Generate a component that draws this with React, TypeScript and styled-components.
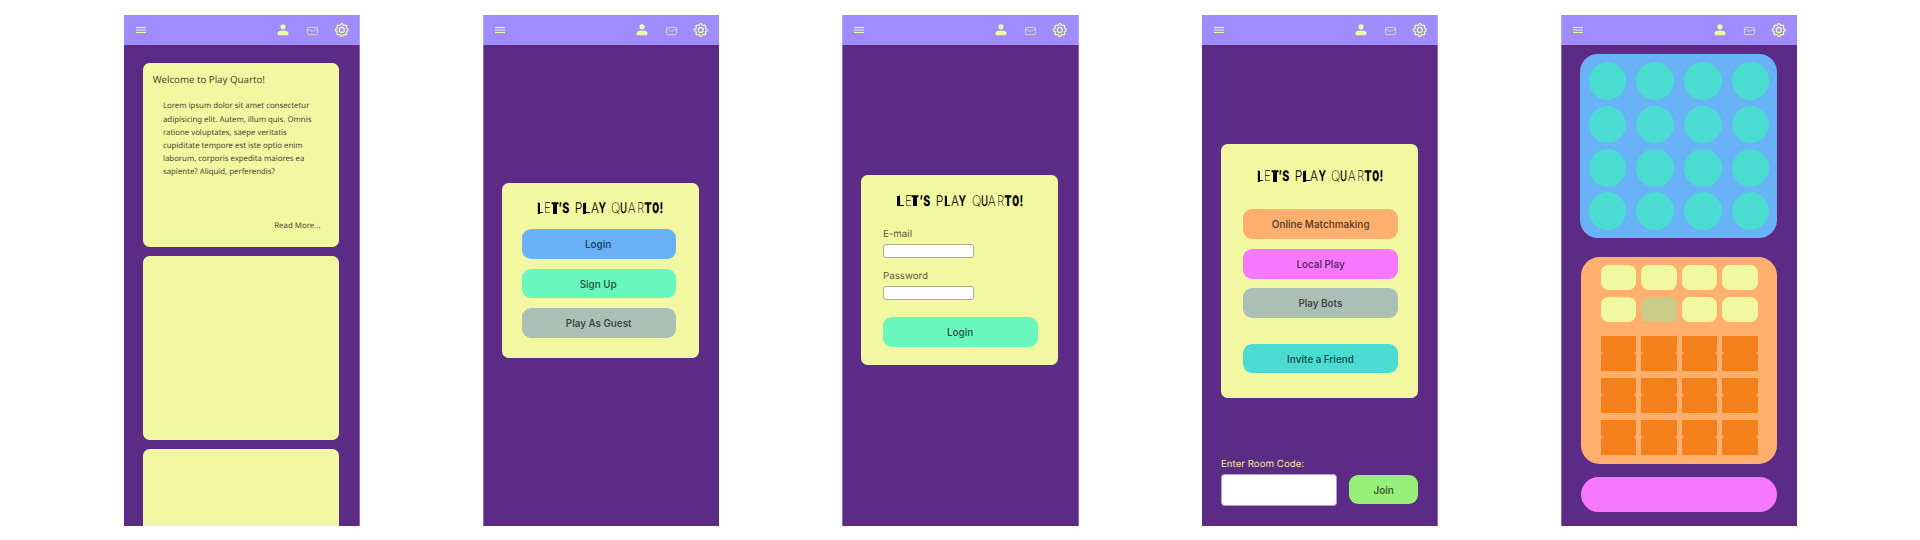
import React from "react";
import styled, { createGlobalStyle } from "styled-components";

const c = {
  purple: "#5b2b85",
  lilac: "#9f8cff",
  cream: "#f2f7a1",
  blue: "#69b2f7",
  mint: "#69f7be",
  grey: "#abbfb6",
  orange: "#ffb06e",
  pink: "#f678ff",
  teal: "#4adbd1",
  lime: "#98ef79",
  deep: "#f4801c",
};

const Global = createGlobalStyle`
  *, *::before, *::after { box-sizing: border-box; }
  body { margin: 0; background: #fff; overflow: hidden; text-rendering: geometricPrecision; }
`;

const Page = styled.main`
  display: flex;
  width: 1920px;
  height: 540px;
  padding: 15px 0 14px 124px;
  font-family: Inter, sans-serif;
`;

const Phone = styled.section<{ $w: number; $after: number }>`
  display: flex;
  flex-direction: column;
  flex: none;
  width: ${(p) => p.$w}px;
  height: 511px;
  margin-right: ${(p) => p.$after}px;
  overflow: hidden;
`;

type Edge = "left" | "right" | "both";
const edges = (e: Edge, color: string) => `
  ${e !== "right" ? `border-left: 1px solid ${color};` : ""}
  ${e !== "left" ? `border-right: 1px solid ${color};` : ""}
`;

const Bar = styled.header<{ $edge: Edge }>`
  display: flex;
  align-items: center;
  flex: none;
  height: 30px;
  background: ${c.lilac};
  ${(p) => edges(p.$edge, "#b5a7ff")}
`;

const BarIcons = styled.svg`
  display: block;
  flex: none;
  width: 234px;
  height: 30px;
`;

const Screen = styled.div<{ $edge: Edge; $pad: string }>`
  display: flex;
  flex-direction: column;
  flex: 1;
  min-height: 0;
  padding: ${(p) => p.$pad};
  background: ${c.purple};
  ${(p) => edges(p.$edge, "#8e6cac")}
`;

const Card = styled.article<{ $h: number; $pad?: string }>`
  display: flex;
  flex-direction: column;
  flex: none;
  width: 196.4px;
  height: ${(p) => p.$h}px;
  padding: ${(p) => p.$pad ?? "0"};
  border-radius: 6.5px;
  background: ${c.cream};
`;

const Feed = styled.div`
  display: flex;
  flex-direction: column;
  gap: 8.6px;
`;

/* Text is laid out at 1.5x and scaled down; the tiny rotation keeps glyphs unhinted. */
const shrink = "rotate(0.02deg) scale(0.66667)";

const PostTitle = styled.h2`
  margin: 0;
  height: 14px;
  > span {
    display: block;
    width: 150%;
    transform: translate(-0.3px, 0.4px) ${shrink};
    transform-origin: 0 0;
    font: 400 14.5px/20px "Noto Sans", sans-serif;
    color: #484a30;
    white-space: nowrap;
  }
`;

const PostBody = styled.p`
  margin: 12.6px 0 0 10px;
  height: 79.2px;
  > span {
    display: block;
    width: 150%;
    transform: translateY(0.6px) ${shrink};
    transform-origin: 0 0;
    font: 400 11.7px/19.8px "Noto Sans", sans-serif;
    color: #484a30;
    white-space: nowrap;
  }
`;

const ReadMore = styled.span`
  align-self: flex-end;
  margin-top: 40.5px;
  height: 13px;
  > span {
    display: block;
    transform: ${shrink};
    transform-origin: 100% 0;
    font: 400 11.8px/19.5px "Noto Sans", sans-serif;
    color: #484a30;
    white-space: nowrap;
  }
`;

const Title = styled.h1`
  display: flex;
  align-self: center;
  flex: none;
  height: 10.8px;
  margin: 0;
`;

const Letter = styled.span<{ $w: number; $weight: number; $sx: number; $gap: number; $stem?: string }>`
  display: flex;
  justify-content: center;
  flex: none;
  width: ${(p) => p.$w}px;
  height: 10.8px;
  margin-right: ${(p) => p.$gap}px;
  font: ${(p) => p.$weight} 14.7px/10.8px Inter, sans-serif;
  color: #000;
  background: ${(p) => (p.$stem ? `linear-gradient(90deg, ${p.$stem})` : "none")};
  > span { transform: rotate(0.02deg) scaleX(${(p) => p.$sx}); }
`;

const ButtonBox = styled.button<{ $bg: string; $mt?: number; $w?: number }>`
  display: flex;
  justify-content: center;
  flex: none;
  width: ${(p) => p.$w ?? 154.8}px;
  height: 29.7px;
  margin: ${(p) => p.$mt ?? 0}px 0 0;
  padding: 0;
  border: 0;
  border-radius: 9px;
  background: ${(p) => p.$bg};
  color: rgba(0, 0, 0, 0.66);
  > span {
    transform: translate(-0.6px, 1px) ${shrink};
    transform-origin: 50% 0;
    font: 600 14.75px/45px Inter, sans-serif;
    white-space: nowrap;
  }
`;

const LabelBox = styled.label<{ $mt: number; $light?: boolean }>`
  display: block;
  flex: none;
  margin-top: ${(p) => p.$mt}px;
  height: 14px;
  color: ${(p) => (p.$light ? "#e9e8a0" : "#5a5c3d")};
  > span {
    display: block;
    width: 150%;
    transform: translateY(0.6px) ${shrink};
    transform-origin: 0 0;
    font: 400 14.6px/21px Inter, sans-serif;
    white-space: nowrap;
  }
`;

const Field = styled.input`
  flex: none;
  width: 91px;
  height: 14px;
  margin: 4.5px 0 0 -0.3px;
  padding: 0 4px;
  border: 1px solid #b5ab8c;
  border-radius: 3px;
  background: #fff;
`;

const JoinRow = styled.div`
  display: flex;
  align-items: center;
  justify-content: space-between;
  width: 197px;
  margin-top: 3.2px;
`;

const CodeField = styled.input`
  width: 116px;
  height: 32px;
  margin: 0;
  border: 1px solid #b79bd0;
  border-radius: 3.5px;
  background: #fff;
`;

const Board = styled.div`
  display: grid;
  grid-template-columns: repeat(4, 37.8px);
  grid-auto-rows: 37.8px;
  gap: 5.55px 9.85px;
  flex: none;
  width: 196.3px;
  height: 184.3px;
  margin-left: 0.2px;
  padding: 8.2px 0 0 8.2px;
  border-radius: 18px;
  background: ${c.blue};
`;

const Slot = styled.div`
  border-radius: 50%;
  background: ${c.teal};
`;

const Tray = styled.div`
  flex: none;
  width: 195.5px;
  height: 207.4px;
  margin: 18.7px 0 0 1px;
  padding: 8.5px 0 0 19.8px;
  border-radius: 18.5px;
  background: ${c.orange};
`;

const Chips = styled.div`
  display: grid;
  grid-template-columns: repeat(4, 35.4px);
  grid-auto-rows: 24.5px;
  gap: 7.2px 5px;
`;

const Chip = styled.div<{ $used: boolean }>`
  border-radius: 7.5px;
  background: ${(p) => (p.$used ? "#cacb87" : c.cream)};
`;

const Tiles = styled.div`
  display: grid;
  grid-template-columns: repeat(4, 35.4px);
  grid-auto-rows: 35px;
  gap: 7px 5px;
  margin-top: 14.1px;
`;

const Tile = styled.div`
  &::before, &::after {
    content: "";
    display: block;
    height: 17.5px;
    background: ${c.deep};
  }
  &::before { border-radius: 0 0 3px 3px; }
  &::after { border-radius: 3px 3px 0 0; }
`;

const Banner = styled.div`
  flex: none;
  width: 195.5px;
  height: 35.5px;
  margin: 12.5px 0 0 1px;
  border-radius: 18px;
  background: ${c.pink};
`;

const gearPath = (() => {
  const pts: string[] = [];
  for (let i = 0; i <= 96; i++) {
    const a = (i / 96) * Math.PI * 2;
    const r = 5.7 + 0.68 * Math.tanh(2 * Math.cos(8 * a));
    pts.push(`${(217.8 + r * Math.sin(a)).toFixed(2)} ${(15 - r * Math.cos(a)).toFixed(2)}`);
  }
  return `M${pts.join("L")}Z`;
})();

function TopBar({ edge }: { edge: Edge }) {
  const lead = edge === "right" ? 0 : 1;
  return (
    <Bar $edge={edge}>
      <BarIcons viewBox={`${lead} 0 234 30`} fill="none">
        <path d="M12 12.5h10M12 17.5h10" stroke={c.cream} strokeWidth="1" />
        <path d="M12 15h10" stroke="#c9c2cf" strokeWidth="2" />
        <circle cx="159" cy="11.8" r="2.6" fill={c.cream} />
        <path d="M153.5 18.4c0-2 1.800-2.800 5.500-2.800s5.500.8 5.500 2.800c0 1.300-.7 1.900-1.800 1.900h-7.400c-1.100 0-1.800-.6-1.800-1.900z" fill={c.cream} />
        <rect x="183.400" y="12.400" width="10.200" height="7.300" rx="1.400" stroke="#d9d4c8" strokeWidth="1" />
        <path d="M183.600 13.900l4.200 2.200q.7.300 1.400 0l4.200-2.200" stroke="#d9d4c8" strokeWidth="1" />
        <path d={gearPath} stroke={c.cream} strokeWidth="1.300" strokeLinejoin="round" />
        <circle cx="217.800" cy="15" r="2.500" stroke={c.cream} strokeWidth="1.300" />
      </BarIcons>
    </Bar>
  );
}

function Button({ bg, mt, w, children }: { bg: string; mt?: number; w?: number; children: string }) {
  return (
    <ButtonBox $bg={bg} $mt={mt} $w={w}>
      <span>{children}</span>
    </ButtonBox>
  );
}

function Label({ mt, light, children }: { mt: number; light?: boolean; children: string }) {
  return (
    <LabelBox $mt={mt} $light={light}>
      <span>{children}</span>
    </LabelBox>
  );
}

const letters: [string, number, number, number, number, string?][] = [
  ["L", 7, 300, 0.8, 0.6, "transparent 0.5px, #000 0.5px 2.6px, transparent 2.6px"],
  ["E", 6.6, 200, 0.78, 0, undefined],
  ["T", 7.7, 700, 0.8, 0, "transparent 1.6px, #000 1.6px 6px, transparent 6px"],
  ["’", 3.4, 700, 0.75, 0.3, undefined],
  ["S", 7.3, 800, 0.72, 5.7, undefined],
  ["P", 7.6, 300, 0.82, 0.7, undefined],
  ["L", 7, 300, 0.8, 0, "transparent 0.5px, #000 0.5px 2.6px, transparent 2.6px"],
  ["A", 8, 300, 0.8, 0, undefined],
  ["Y", 7.4, 700, 0.7, 5, undefined],
  ["Q", 9.2, 200, 0.84, 0.3, undefined],
  ["U", 6.3, 500, 0.65, 0.8, undefined],
  ["A", 8.4, 200, 0.82, 1, undefined],
  ["R", 6.7, 200, 0.75, 0.3, undefined],
  ["T", 7.7, 800, 0.75, 0.4, undefined],
  ["O", 7, 900, 0.6, 1, undefined],
  ["!", 2.8, 700, 0.75, 0, undefined],
];

function GameTitle() {
  return (
    <Title>
      {letters.map(([ch, w, weight, sx, gap, stem], i) => (
        <Letter key={i} $w={w} $weight={weight} $sx={sx} $gap={gap} $stem={stem}>
          <span>{ch}</span>
        </Letter>
      ))}
    </Title>
  );
}

const range = (n: number) => Array.from({ length: n }, (_, i) => i);

export default function App() {
  return (
    <Page>
      <Global />
      <Phone $w={236} $after={123}>
        <TopBar edge="right" />
        <Screen $edge="right" $pad="18px 0 0 19.1px">
          <Feed>
            <Card $h={184.4} $pad="9.700px 19px 0 9.700px">
              <PostTitle><span>Welcome to Play Quarto!</span></PostTitle>
              <PostBody>
                <span>
                  Lorem ipsum dolor sit amet consectetur<br />
                  adipisicing elit. Autem, illum quis. Omnis<br />
                  ratione voluptates, saepe veritatis<br />
                  cupiditate tempore est iste optio enim<br />
                  laborum, corporis expedita maiores ea<br />
                  sapiente? Aliquid, perferendis?
                </span>
              </PostBody>
              <ReadMore><span>Read More...</span></ReadMore>
            </Card>
            <Card $h={184.4} />
            <Card $h={184.4} />
          </Feed>
        </Screen>
      </Phone>
      <Phone $w={236} $after={123}>
        <TopBar edge="left" />
        <Screen $edge="left" $pad="137.700px 0 0 18.300px">
          <Card $h={175} $pad="20.800px 21px 0 19.400px">
            <GameTitle />
            <Button bg={c.blue} mt={15}>Login</Button>
            <Button bg={c.mint} mt={9.8}>Sign Up</Button>
            <Button bg={c.grey} mt={9.8}>Play As Guest</Button>
          </Card>
        </Screen>
      </Phone>
      <Phone $w={237} $after={123}>
        <TopBar edge="both" />
        <Screen $edge="both" $pad="129.800px 0 0 18.400px">
          <Card $h={190.7} $pad="20.800px 20.600px 0 22px">
            <GameTitle />
            <Label mt={19.3}>E-mail</Label>
            <Field />
            <Label mt={9.4}>Password</Label>
            <Field />
            <Button bg={c.mint} mt={17.3}>Login</Button>
          </Card>
        </Screen>
      </Phone>
      <Phone $w={236} $after={123}>
        <TopBar edge="right" />
        <Screen $edge="right" $pad="98.800px 0 0 19.400px">
          <Card $h={254} $pad="27px 22px 0 22px">
            <GameTitle />
            <Button bg={c.orange} mt={27.8}>Online Matchmaking</Button>
            <Button bg={c.pink} mt={9.8}>Local Play</Button>
            <Button bg={c.grey} mt={9.8}>Play Bots</Button>
            <Button bg={c.teal} mt={25.6}>Invite a Friend</Button>
          </Card>
          <Label mt={58.6} light>Enter Room Code:</Label>
          <JoinRow>
            <CodeField />
            <Button bg={c.lime} w={69}>Join</Button>
          </JoinRow>
        </Screen>
      </Phone>
      <Phone $w={236} $after={0}>
        <TopBar edge="left" />
        <Screen $edge="left" $pad="9px 0 0 18.300px">
          <Board>{range(16).map((i) => <Slot key={i} />)}</Board>
          <Tray>
            <Chips>{range(8).map((i) => <Chip key={i} $used={i === 5} />)}</Chips>
            <Tiles>{range(12).map((i) => <Tile key={i} />)}</Tiles>
          </Tray>
          <Banner />
        </Screen>
      </Phone>
    </Page>
  );
}
